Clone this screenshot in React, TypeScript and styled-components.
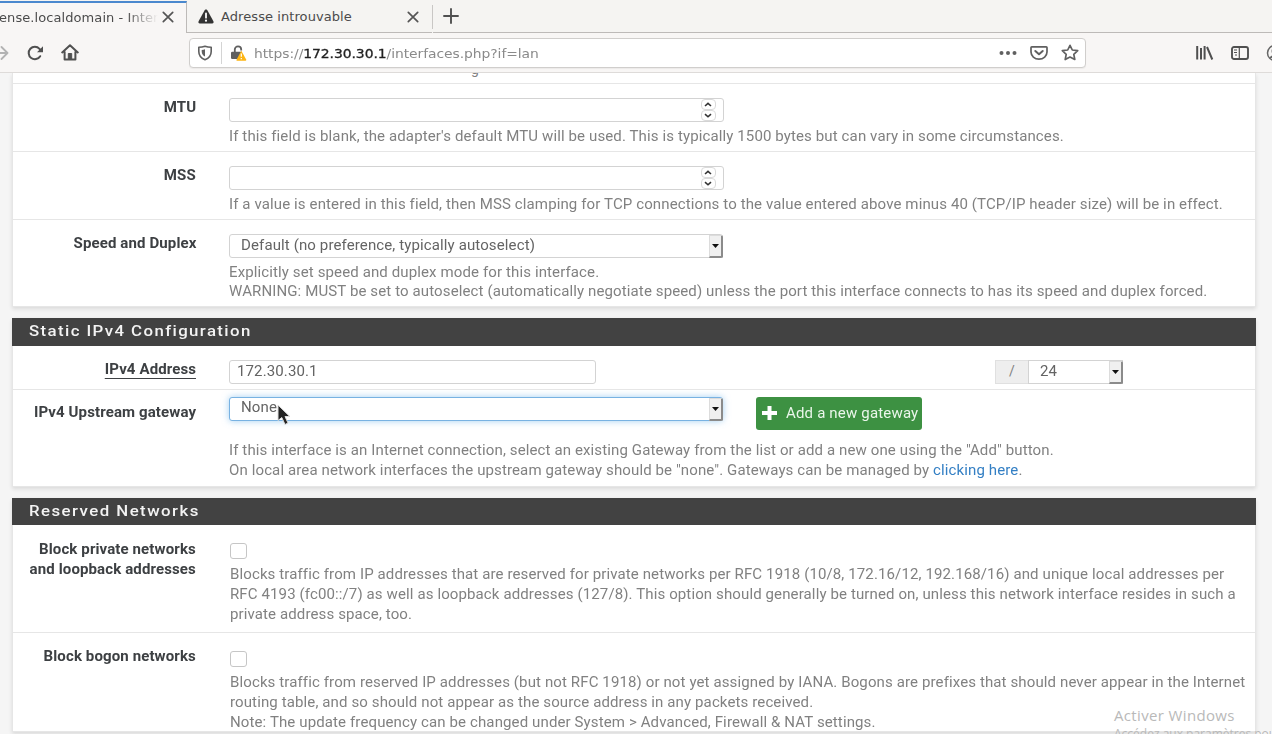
import React from 'react';
import styled, { createGlobalStyle, css } from 'styled-components';

const Global = createGlobalStyle`
  *, *::before, *::after { box-sizing: border-box; }
  html, body { margin: 0; height: 734px; overflow: hidden; background: #f5f5f5; }
  body { font-family: Roboto, "Liberation Sans", sans-serif; font-size: 14px; color: #818181; }
  svg { display: block; flex: none; }
`;

const Window = styled.div`
  position: relative;
  width: 1272px;
  height: 734px;
  overflow: hidden;
  display: flex;
  flex-direction: column;
`;

const TabStrip = styled.div`
  flex: none;
  display: flex;
  height: 33px;
  background: #f5f4f2;
  font-family: "DejaVu Sans", sans-serif;
  font-size: 13px;
  color: #4b4b4b;
`;

const Tab = styled.div<{ $active?: boolean; $width: number }>`
  width: ${p => p.$width}px;
  display: flex;
  align-items: center;
  white-space: nowrap;
  ${p => p.$active
    ? css`background: #f8f6f5; border-top: 2px solid #4a88ce; border-right: 1px solid #bdbab8; margin-top: 1px; padding-bottom: 2px;`
    : css`border-bottom: 1px solid #bdbab8; padding: 1px 0 0 11px;`}
`;

const TabTitle = styled.span<{ $fade?: boolean; $width: number; $shift?: number }>`
  width: ${p => p.$width}px;
  overflow: hidden;
  text-indent: ${p => p.$shift ?? 0}px;
  letter-spacing: 0.08px;
  ${p => p.$fade && css`mask-image: linear-gradient(to right, #000 126px, transparent 158px);`}
`;

const TabSeparator = styled.div`
  width: 1px;
  height: 24px;
  margin-top: 5px;
  background: #c9c7c5;
`;

const TabRest = styled.div`
  flex: 1;
  padding: 8px 0 0 10px;
  border-bottom: 1px solid #bdbab8;
`;

const NavBar = styled.div`
  flex: none;
  display: flex;
  align-items: center;
  height: 40px;
  background: #f8f6f5;
  border-bottom: 1px solid #dedbd9;
`;

const NavButtons = styled.div`
  flex: none;
  display: flex;
  align-items: center;
  width: 189px;
  gap: 17px;
  margin-left: -8.5px;
  margin-right: 8px;
`;

const UrlBar = styled.div`
  flex: none;
  display: flex;
  align-items: center;
  width: 897px;
  height: 30px;
  border: 1px solid #d0cecc;
  border-radius: 4px;
  background: #fff;
  padding-left: 7px;
  box-shadow: 0 1px 1px rgba(0, 0, 0, 0.05);
`;

const UrlDivider = styled.div`
  width: 1px;
  height: 22px;
  background: #d4d4d4;
  margin: 0 8px 0 8px;
`;

const UrlText = styled.span`
  flex: 1;
  margin-left: 7.5px;
  padding-top: 1px;
  font-family: "DejaVu Sans", sans-serif;
  font-size: 13px;
  letter-spacing: -0.05px;
  color: #8a8a8a;
  transform: scaleX(1.067);
  transform-origin: left;
  b { font-weight: 400; color: #222; -webkit-text-stroke: 0.3px #222; }
`;

const UrlActions = styled.div`
  display: flex;
  align-items: center;
  gap: 13px;
  margin-right: 6px;
`;

const NavTools = styled.div`
  flex: none;
  display: flex;
  align-items: center;
  gap: 17px;
  margin-left: 109px;
`;

const Page = styled.main`
  height: 661px;
  padding-left: 12px;
  overflow: hidden;
`;

const Panel = styled.section<{ $height: number; $gap?: number }>`
  width: 1244px;
  height: ${p => p.$height}px;
  margin-bottom: ${p => p.$gap ?? 11}px;
  background: #fff;
  border: 1px solid #e6e6e6;
  border-top: 0;
  box-shadow: 0 2px 4px rgba(0, 0, 0, 0.11);
`;

const Wide = styled.span<{ $ls?: number; $from?: string; $scale?: number }>`
  display: inline-block;
  white-space: nowrap;
  letter-spacing: ${p => p.$ls ?? 0.1}px;
  transform: scaleX(${p => p.$scale ?? 1.0735});
  transform-origin: ${p => p.$from ?? 'left'};
`;

const PanelHeading = styled.h2<{ $height: number }>`
  margin: 0 -1px;
  height: ${p => p.$height}px;
  padding-left: 17px;
  background: #424242;
  color: #f3f3f3;
  font-size: 15px;
  font-weight: 500;
  line-height: ${p => p.$height - 1}px;
`;

const Row = styled.div<{ $height: number; $last?: boolean }>`
  display: flex;
  height: ${p => p.$height}px;
  overflow: hidden;
  border-bottom: ${p => (p.$last ? 0 : 1)}px solid #e6e6e6;
`;

const Label = styled.label<{ $top: number }>`
  width: 183px;
  flex: none;
  padding-top: ${p => p.$top}px;
  text-align: right;
  white-space: nowrap;
  line-height: 20px;
  font-weight: 700;
  color: #3d4043;
  u { text-decoration: none; border-bottom: 1px solid #3d4043; padding-bottom: 1px; }
`;

const Content = styled.div<{ $top: number; $left?: number }>`
  flex: 1;
  padding: ${p => p.$top}px 0 0 ${p => p.$left ?? 33}px;
`;

const Help = styled.div<{ $top: number }>`
  margin-top: ${p => p.$top}px;
  line-height: 19.7px;
`;

const Line = styled(Wide)`
  display: block;
  width: max-content;
`;

const Link = styled.a`
  color: #337fc4;
`;

const Controls = styled.div`
  display: flex;
  align-items: flex-start;
  height: 24px;
`;

const Field = styled.div<{ $width: number; $focus?: boolean; $pad?: number; $square?: boolean }>`
  display: flex;
  justify-content: space-between;
  width: ${p => p.$width}px;
  height: 24px;
  padding-left: ${p => p.$pad ?? 7}px;
  border: 1px solid #d3d3d3;
  border-radius: ${p => (p.$square ? 0 : 3)}px;
  background: #fff;
  color: #646464;
  line-height: 20px;
  ${p => p.$focus && css`border-color: #78b2e2; box-shadow: 0 0 7px rgba(102, 175, 233, 0.6); line-height: 19px;`}
`;

const Spinner = styled.div`
  width: 15px;
  height: 22px;
  margin-right: 7px;
  display: flex;
  flex-direction: column;
`;

const SpinButton = styled.div`
  display: flex;
  align-items: center;
  justify-content: center;
  height: 11px;
  border: 1px solid #dadada;
  border-radius: 4px;
`;

const DropButton = styled.div`
  display: flex;
  align-items: center;
  justify-content: center;
  width: 14px;
  height: 23px;
  margin-right: -1px;
  background: #f0f0f0;
  border: 1px solid #dcdcdc;
  border-right: 2px solid #8b8b8b;
  border-bottom: 2px solid #8b8b8b;
  border-radius: 0 2px 2px 0;
`;

const Addon = styled.div`
  width: 33px;
  height: 24px;
  margin-left: 399px;
  background: #eee;
  border: 1px solid #e0e0e0;
  border-right: 0;
  text-align: center;
  line-height: 20px;
`;

const AddButton = styled.button`
  display: flex;
  align-items: center;
  width: 166px;
  height: 33px;
  margin-left: 33px;
  padding: 0 0 2px 6px;
  border: 0;
  border-radius: 3px;
  background: #3d9142;
  color: #eaf6ea;
  font: 14px Roboto, sans-serif;
  gap: 9px;
  white-space: nowrap;
`;

const Checkbox = styled.div`
  width: 17px;
  height: 16px;
  border: 1px solid #c6c6c6;
  border-radius: 3px;
`;

const Clipped = styled.div`
  margin-left: 458px;
  margin-top: -12px;
  line-height: 16px;
`;

const Pointer = styled.svg`
  position: absolute;
  left: 277px;
  top: 404px;
`;

const Watermark = styled.div`
  position: absolute;
  left: 1114px;
  top: 705px;
  width: 170px;
  color: #b9b9b9;
  font-family: "Open Sans", "Noto Sans", sans-serif;
  font-size: 15px;
  letter-spacing: 0.35px;
  line-height: 20px;
  white-space: nowrap;
  small { display: block; font-size: 12px; letter-spacing: 0; line-height: 17px; }
`;

const Close = () => (
  <svg width="12" height="12" viewBox="0 0 12 12" stroke="#555" strokeWidth="1.7" strokeLinecap="round">
    <path d="M1.3 1.3 10.7 10.7M10.7 1.3 1.3 10.7" />
  </svg>
);

const Drop = () => (
  <DropButton>
    <svg width="7" height="4" viewBox="0 0 7 4"><path d="M0 0h7L3.5 4z" fill="#111" /></svg>
  </DropButton>
);

const Spin = () => (
  <Spinner>
    {['M1 4 4 1.4 7 4', 'M1 1.2 4 3.8 7 1.2'].map(d => (
      <SpinButton key={d}>
        <svg width="8" height="5" viewBox="0 0 8 5" fill="none" stroke="#333" strokeWidth="1.6"><path d={d} /></svg>
      </SpinButton>
    ))}
  </Spinner>
);

export default function App() {
  return (
    <Window>
      <Global />
      <TabStrip>
        <Tab $active $width={187}>
          <TabTitle $fade $width={162} $shift={-1}>ense.localdomain - Interfaces</TabTitle>
          <Close />
        </Tab>
        <Tab $width={245}>
          <svg width="16" height="15" viewBox="0 0 16 15">
            <path d="M8 .6c.8 0 1.2.5 1.5 1l5.9 10.7c.6 1.1 0 2.2-1.2 2.2H1.8c-1.2 0-1.8-1.1-1.2-2.2L6.5 1.6C6.8 1.1 7.2.6 8 .6Z" fill="#333" />
            <path d="M8 4.4v4.3" stroke="#fff" strokeWidth="1.8" strokeLinecap="round" />
            <circle cx="8" cy="11.7" r="1.1" fill="#fff" />
          </svg>
          <TabTitle $width={193} $shift={7}>Adresse introuvable</TabTitle>
          <Close />
        </Tab>
        <TabSeparator />
        <TabRest>
          <svg width="16" height="16" viewBox="0 0 16 16" stroke="#505050" strokeWidth="1.9" strokeLinecap="round">
            <path d="M8 1v14M1 8h14" />
          </svg>
        </TabRest>
      </TabStrip>

      <NavBar>
        <NavButtons>
          <svg width="17" height="16" viewBox="0 0 17 16" fill="none" stroke="#b3b3b3" strokeWidth="1.8" strokeLinecap="round" strokeLinejoin="round">
            <path d="M1 8h14M9.5 2 15.5 8 9.5 14" />
          </svg>
          <svg width="18" height="16" viewBox="0 0 18 16" fill="none" stroke="#505050" strokeWidth="2" strokeLinecap="round">
            <path d="M14.2 11.2A6.2 6.2 0 1 1 13.5 3.8L15 5.5" />
            <path d="M17 1.2V7.2H11Z" fill="#505050" stroke="none" />
          </svg>
          <svg width="18" height="17" viewBox="0 0 18 17" fill="none" stroke="#505050" strokeWidth="2" strokeLinecap="round" strokeLinejoin="round">
            <path d="M1.2 8.4 9 1.3 16.8 8.4M3.6 8V15.5H14.4V8" />
            <path d="M7.3 15V9.5H10.7V15Z" fill="#505050" strokeWidth="1" />
          </svg>
        </NavButtons>
        <UrlBar>
          <svg width="16" height="16" viewBox="0 0 16 16" fill="none" stroke="#606060" strokeWidth="1.6" strokeLinejoin="round">
            <path d="M8 1.3C10 2 12.3 2.3 14.2 2.3V6.5C14.2 10.8 11.5 13.4 8 14.7C4.5 13.4 1.8 10.8 1.8 6.5V2.3C3.7 2.3 6 2 8 1.3Z" />
            <path d="M8 4.3V11.6C6 10.5 4.7 9 4.7 6.5V4.9C6 4.8 7 4.6 8 4.3Z" fill="#606060" stroke="none" />
          </svg>
          <UrlDivider />
          <svg width="17" height="16" viewBox="0 0 17 16">
            <path d="M4.8 8V4.6a3.2 3.2 0 0 1 6.4 0v.8" fill="none" stroke="#606060" strokeWidth="1.8" />
            <rect x="1" y="6.7" width="11" height="7.3" rx="1.2" fill="#606060" />
            <path d="M11.3 5.7 16.3 14.7Q16.3 15.7 15.5 15.7H7Q6.1 15.5 6.5 14.7Z" fill="#fdb515" />
            <path d="M11.3 8.5v3.3M11.3 13v1.3" stroke="#fff" strokeWidth="1.2" />
          </svg>
          <UrlText>https://<b>172.30.30.1</b>/interfaces.php?if=lan</UrlText>
          <UrlActions>
            <svg width="18" height="6" viewBox="0 0 18 6" fill="#606060">
              <circle cx="2.5" cy="3" r="2" /><circle cx="9" cy="3" r="2" /><circle cx="15.5" cy="3" r="2" />
            </svg>
            <svg width="18" height="16" viewBox="0 0 18 16" fill="none" stroke="#606060" strokeWidth="1.7" strokeLinecap="round" strokeLinejoin="round">
              <path d="M1.8 1.8H16.2Q17 1.8 17 2.6V7A8 7.2 0 0 1 1 7V2.6Q1 1.8 1.8 1.8Z" />
              <path d="M5.3 6 9 9.3 12.7 6" strokeWidth="2" />
            </svg>
            <svg width="18" height="17" viewBox="0 0 18 17" fill="none" stroke="#606060" strokeWidth="1.7" strokeLinejoin="round">
              <path d="M9 1.3 11.3 6 16.7 6.7 12.8 10.3 13.8 15.5 9 13 4.2 15.5 5.2 10.3 1.3 6.7 6.7 6Z" />
            </svg>
          </UrlActions>
        </UrlBar>
        <NavTools>
          <svg width="19" height="16" viewBox="0 0 19 16" fill="none" stroke="#505050" strokeWidth="2">
            <path d="M2.2 1V14.5M6 3V14.5M9.6 1V14.5M12 2 17.3 14.5" />
          </svg>
          <svg width="18" height="14" viewBox="0 0 18 14" fill="none" stroke="#505050" strokeWidth="1.9">
            <rect x="1" y="1" width="16" height="12" rx="2" />
            <path d="M8.3 1V13" strokeWidth="1.2" />
            <path d="M3 4H6M3 6.5H6M4 9H6" strokeWidth="1" />
          </svg>
          <svg width="18" height="18" viewBox="0 0 18 18" fill="none" stroke="#666" strokeWidth="1.5">
            <circle cx="9" cy="9" r="7.5" /><circle cx="9" cy="7" r="2.7" fill="#666" /><path d="M4 14Q9 9 14 14" fill="#666" />
          </svg>
        </NavTools>
      </NavBar>

      <Page>
        <Panel $height={234}>
          <Row $height={11}><Clipped>g</Clipped></Row>
          <Row $height={68}>
            <Label $top={13}><Wide $from="right">MTU</Wide></Label>
            <Content $top={14}>
              <Field $width={494.5}><span /><Spin /></Field>
              <Help $top={5}><Line>If this field is blank, the adapter's default MTU will be used. This is typically 1500 bytes but can vary in some circumstances.</Line></Help>
            </Content>
          </Row>
          <Row $height={68}>
            <Label $top={13}><Wide $from="right">MSS</Wide></Label>
            <Content $top={14}>
              <Field $width={494.5}><span /><Spin /></Field>
              <Help $top={5}><Line>If a value is entered in this field, then MSS clamping for TCP connections to the value entered above minus 40 (TCP/IP header size) will be in effect.</Line></Help>
            </Content>
          </Row>
          <Row $height={86} $last>
            <Label $top={13}><Wide $from="right">Speed and Duplex</Wide></Label>
            <Content $top={14}>
              <Field $width={494} $pad={11}><Wide>Default (no preference, typically autoselect)</Wide><Drop /></Field>
              <Help $top={4.6}>
                <Line>Explicitly set speed and duplex mode for this interface.</Line>
                <Line>WARNING: MUST be set to autoselect (automatically negotiate speed) unless the port this interface connects to has its speed and duplex forced.</Line>
              </Help>
            </Content>
          </Row>
        </Panel>

        <Panel $height={169}>
          <PanelHeading $height={28}><Wide $ls={1.25} $scale={1.12}>Static IPv4 Configuration</Wide></PanelHeading>
          <Row $height={44}>
            <Label $top={13}><Wide $from="right"><u>IPv4 Address</u></Wide></Label>
            <Content $top={14}>
              <Controls>
                <Field $width={367}><Wide>172.30.30.1</Wide></Field>
                <Addon>/</Addon>
                <Field $width={95} $pad={11} $square><Wide>24</Wide><Drop /></Field>
              </Controls>
            </Content>
          </Row>
          <Row $height={96} $last>
            <Label $top={12}><Wide $from="right">IPv4 Upstream gateway</Wide></Label>
            <Content $top={7}>
              <Controls>
                <Field $width={494} $pad={11} $focus><Wide>None</Wide><Drop /></Field>
                <AddButton>
                  <svg width="15" height="14" viewBox="0 0 15 14"><path d="M5.5 0h4v5H15v4H9.500v5h-4V9H0V5h5.500z" fill="#fff" /></svg>
                  <Wide $ls={0.15}>Add a new gateway</Wide>
                </AddButton>
              </Controls>
              <Help $top={20.4}>
                <Line>If this interface is an Internet connection, select an existing Gateway from the list or add a new one using the "Add" button.</Line>
                <Line>On local area network interfaces the upstream gateway should be "none". Gateways can be managed by <Link>clicking here</Link>.</Line>
              </Help>
            </Content>
          </Row>
        </Panel>

        <Panel $height={234} $gap={0}>
          <PanelHeading $height={27}><Wide $ls={1.3} $scale={1.12}>Reserved Networks</Wide></PanelHeading>
          <Row $height={108}>
            <Label $top={14}><Wide $from="right">Block private networks<br />and loopback addresses</Wide></Label>
            <Content $top={18} $left={34}>
              <Checkbox />
              <Help $top={6.4}>
                <Line>Blocks traffic from IP addresses that are reserved for private networks per RFC 1918 (10/8, 172.16/12, 192.168/16) and unique local addresses per</Line>
                <Line>RFC 4193 (fc00::/7) as well as loopback addresses (127/8). This option should generally be turned on, unless this network interface resides in such a</Line>
                <Line>private address space, too.</Line>
              </Help>
            </Content>
          </Row>
          <Row $height={98} $last>
            <Label $top={13}><Wide $from="right">Block bogon networks</Wide></Label>
            <Content $top={18} $left={34}>
              <Checkbox />
              <Help $top={6.4}>
                <Line>Blocks traffic from reserved IP addresses (but not RFC 1918) or not yet assigned by IANA. Bogons are prefixes that should never appear in the Internet</Line>
                <Line>routing table, and so should not appear as the source address in any packets received.</Line>
                <Line>Note: The update frequency can be changed under System &gt; Advanced, Firewall &amp; NAT settings.</Line>
              </Help>
            </Content>
          </Row>
        </Panel>
      </Page>

      <Pointer width="14" height="22" viewBox="0 0 14 22">
        <path d="M1 1V16.5L4.8 13.5 8 20.5 11 19 8 12.5H12.8Z" fill="#222" stroke="#ddd" strokeWidth="1" />
      </Pointer>
      <Watermark>Activer Windows<small>Accédez aux paramètres pour</small></Watermark>
    </Window>
  );
}
